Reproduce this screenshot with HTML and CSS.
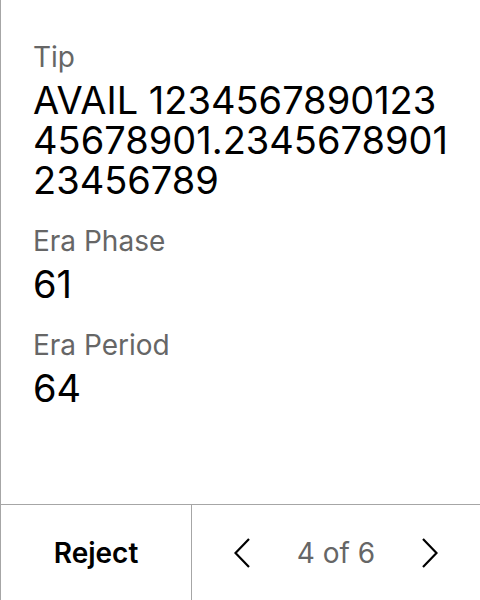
FILE: index.html
```html
<!DOCTYPE html>
<html>
<head>
<meta charset="utf-8">
<link rel="stylesheet" href="styles.css">
</head>
<body>
<div class="panel">
  <div class="content">
    <div class="field">
      <div class="label">Tip</div>
      <div class="value">AVAIL 1234567890123 45678901.2345678901 23456789</div>
    </div>
    <div class="field">
      <div class="label">Era Phase</div>
      <div class="value">61</div>
    </div>
    <div class="field">
      <div class="label">Era Period</div>
      <div class="value">64</div>
    </div>
  </div>
  <div class="footer">
    <button class="reject">Reject</button>
    <div class="pager">
      <button class="nav" aria-label="Previous">
        <svg width="16" height="30" viewBox="0 0 16 30"><path d="M15 1 L1.5 15 L15 29" fill="none" stroke="#000" stroke-width="2.2"/></svg>
      </button>
      <span class="count">4 of 6</span>
      <button class="nav" aria-label="Next">
        <svg width="16" height="30" viewBox="0 0 16 30"><path d="M1 1 L14.5 15 L1 29" fill="none" stroke="#000" stroke-width="2.2"/></svg>
      </button>
    </div>
  </div>
</div>
</body>
</html>
```

FILE: styles.css
```css
html, body {
  margin: 0;
  padding: 0;
  background: #fff;
}
body {
  font-family: Inter, "Noto Sans", sans-serif;
  color: #000;
}
.panel {
  width: 479px;
  height: 600px;
  border-left: 1px solid #a6a6a6;
  display: flex;
  flex-direction: column;
}
.content {
  flex: 1;
  padding: 41px 32px 0 32px;
  display: flex;
  flex-direction: column;
  gap: 25px;
}
.field {
  display: flex;
  flex-direction: column;
  gap: 7px;
}
.label {
  font-size: 28px;
  line-height: 32px;
  color: #666;
}
.value {
  font-size: 38px;
  line-height: 40px;
  color: #000;
  width: 414px;
}
.footer {
  height: 95px;
  border-top: 1px solid #a6a6a6;
  display: flex;
}
button {
  font-family: inherit;
  background: none;
  border: none;
  padding: 0;
  margin: 0;
  cursor: pointer;
}
.reject {
  width: 191px;
  border-right: 1px solid #a6a6a6;
  font-size: 28px;
  font-weight: 600;
  color: #000;
}
.pager {
  flex: 1;
  display: flex;
  align-items: center;
  justify-content: space-between;
  padding: 0 42px;
}
.nav {
  display: flex;
  width: 16px;
  height: 30px;
}
.count {
  font-size: 28px;
  color: #666;
}
```
